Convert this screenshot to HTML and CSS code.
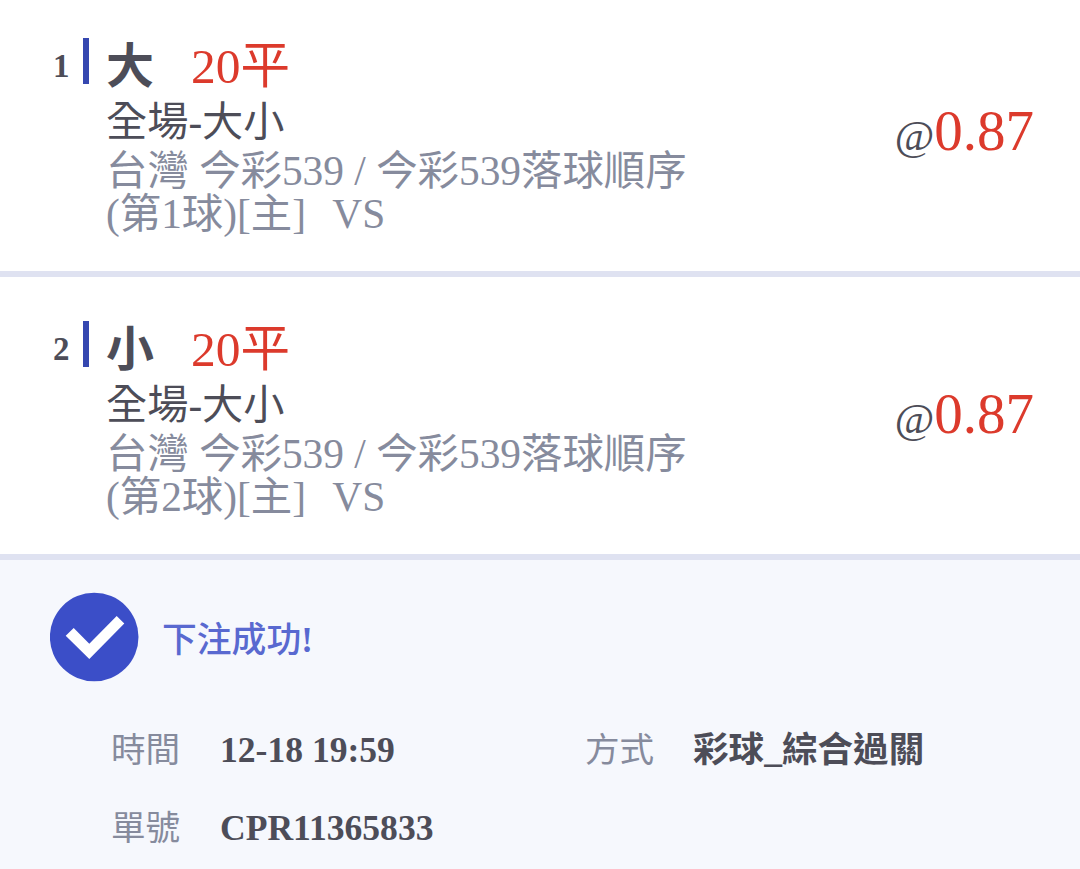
FILE: index.html
```html
<!DOCTYPE html>
<html lang="zh-Hant">
<head>
    <meta charset="utf-8">
    <title>下注成功</title>
    <meta name="viewport" content="width=device-width, initial-scale=1">
    <link rel="stylesheet" href="styles.css">
</head>
<body>
    <section class="bet">
        <div class="num">1</div>
        <div class="bar"></div>
        <div class="info">
            <div class="pick"><b>大</b><span class="line">20平</span></div>
            <div class="market">全場-大小</div>
            <div class="match">台灣 今彩539 / 今彩539落球順序<br>(第1球)[主] <span class="vs">VS</span></div>
        </div>
        <div class="odds"><span class="at">@</span>0.87</div>
    </section>
    <section class="bet">
        <div class="num">2</div>
        <div class="bar"></div>
        <div class="info">
            <div class="pick"><b>小</b><span class="line">20平</span></div>
            <div class="market">全場-大小</div>
            <div class="match">台灣 今彩539 / 今彩539落球順序<br>(第2球)[主] <span class="vs">VS</span></div>
        </div>
        <div class="odds"><span class="at">@</span>0.87</div>
    </section>
    <section class="result">
        <div class="status">
            <svg class="check" viewBox="0 0 90 90">
                <circle cx="44.2" cy="45" r="44.3" fill="#3b4ec8"/>
                <path d="M15.7 43.7 L23.7 36 L39.3 51.7 L66.7 24 L74.3 31.5 L39.3 67 Z" fill="#fff"/>
            </svg>
            <span>下注成功<b>!</b></span>
        </div>
        <dl class="details">
            <dt>時間</dt><dd>12-18 19:59</dd>
            <dt>方式</dt><dd>彩球_綜合過關</dd>
            <dt>單號</dt><dd>CPR11365833</dd>
        </dl>
    </section>
</body>
</html>
```

FILE: styles.css
```css
body {
    margin: 0;
    background: #fff;
    color: #4d4d58;
    font-family: "Liberation Serif", "Noto Sans CJK TC", sans-serif;
    height: 869px;
    overflow: hidden;
    display: flex;
    flex-direction: column;
}

.bet {
    display: flex;
    box-sizing: border-box;
    flex: none;
    height: 277px;
    padding: 38px 46px 0 53px;
    border-bottom: 6px solid #dfe2f1;
}

.bet + .bet {
    height: 283px;
    padding-top: 44px;
}

.num {
    width: 30px;
    font-size: 33px;
    font-weight: bold;
    line-height: 56px;
}

.bar {
    width: 6px;
    height: 46px;
    margin-right: 17px;
    background: #3547b0;
}

.info {
    flex: 1;
    white-space: nowrap;
}

.pick {
    height: 62px;
    line-height: 57px;
    font-size: 48px;
}

.line {
    margin-left: 37px;
    font-size: 49.5px;
    color: #dc3a2c;
}

.market {
    height: 50px;
    line-height: 45px;
    font-size: 41.2px;
}

.match {
    line-height: 43px;
    font-size: 41.4px;
    color: #868b9d;
}

.vs {
    margin-left: 16px;
}

.odds {
    height: 186px;
    line-height: 186px;
    font-size: 57px;
    color: #dc3a2c;
}

.at {
    font-size: 43px;
    color: #4d4d58;
}

.result {
    flex: 1;
    padding: 32px 50px 0;
    background: #f6f8fd;
}

.status {
    display: flex;
    align-items: center;
    gap: 22px;
    font-size: 34.8px;
    font-weight: 500;
    color: #5969d0;
}

.check {
    width: 90px;
    height: 90px;
}

.details {
    display: grid;
    grid-template-columns: 109px 365px 108px 1fr;
    margin: 29px 0 0 61px;
    line-height: 78px;
    font-size: 35.6px;
}

dt {
    font-size: 34.6px;
    color: #868b9d;
}

dd {
    margin: 0;
    font-weight: bold;
    white-space: nowrap;
}
```
